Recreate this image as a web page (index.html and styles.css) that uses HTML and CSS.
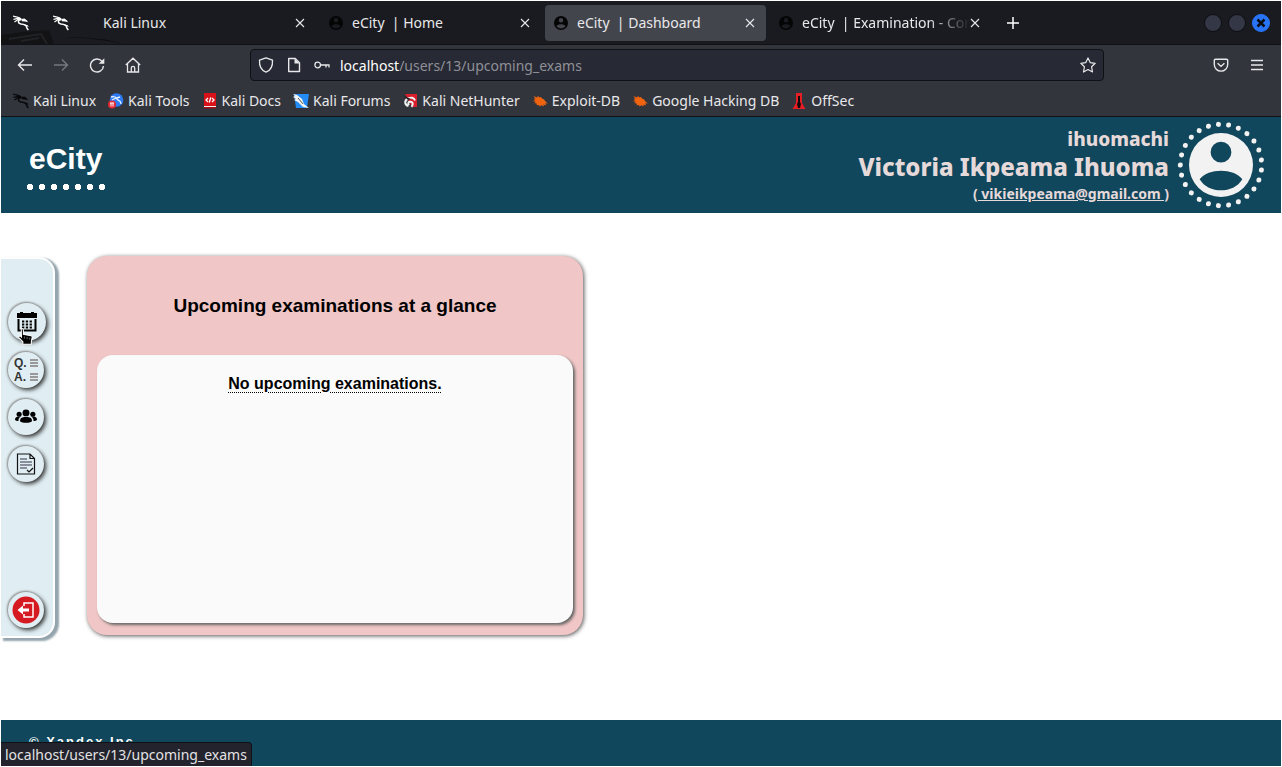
FILE: index.html
```html
<!DOCTYPE html>
<html lang="en">
<head>
<meta charset="utf-8">
<title>eCity | Dashboard</title>
<link rel="stylesheet" href="styles.css">
</head>
<body>
<svg class="defs" aria-hidden="true">
  <symbol id="dragon" viewBox="0 0 16 16"><path d="M0 1.2 6 2.6 8.2 4M.5 4.4 5 3.4l3 .9M1.5 7 5 4.6l3.2.2" fill="none" stroke="currentColor" stroke-width="1.2"/><path d="M7.5 4.2C4.5 5 4.8 8.6 8 9c3 .3 5 .6 5.400 2.600.3 1.500.9 2.400 2 3.400" fill="none" stroke="currentColor" stroke-width="1.500"/><path d="m8 4 3.500-.5 2.500 2 1 1.800-2.800-.8L9 6.300zM9.500 9.500l5 .5 1.300 2-2.800-1.200z" fill="currentColor"/></symbol>
  <symbol id="person" viewBox="0 0 24 24"><path fill="currentColor" fill-rule="evenodd" d="M12 0a12 12 0 1 0 0 24 12 12 0 0 0 0-24zm0 3.300a3.900 3.900 0 1 1 0 7.800 3.900 3.900 0 0 1 0-7.800zM4 17.300c3.300-4.200 12.700-4.200 16 0-3.300 5.600-12.700 5.600-16 0z"/></symbol>
  <symbol id="close" viewBox="0 0 10 10"><path d="m1 1 8 8M9 1 1 9" fill="none" stroke="currentColor" stroke-width="1.100"/></symbol>
  <symbol id="bug" viewBox="0 0 16 16"><path fill="#f1640f" d="M1.500 3 5 4.500 6 3l1.500 1.500L9 4l1.200 1.800 1.800.5 1 1.700 2.800 2.400-2.600-.1 1 2.300-2.600-1.200-.1 2-2-1.200-2 1.300-.5-1.500-2.500.3.500-1.500-2.800-.7 1.800-1L.8 8l2.400-.8-1.700-1.600 2 .2z"/></symbol>
</svg>

<header class="browser">
  <div class="tabs">
    <button class="pin" aria-label="Kali Linux"><svg class="i16"><use href="#dragon"/></svg></button>
    <button class="pin" aria-label="Kali Linux"><svg class="i16"><use href="#dragon"/></svg></button>
    <div class="tab first"><span class="title">Kali Linux</span><button class="x" aria-label="Close tab"><svg class="i10"><use href="#close"/></svg></button></div>
    <div class="tab"><svg class="i14 fav"><use href="#person"/></svg><span class="title">eCity&nbsp; | Home</span><button class="x" aria-label="Close tab"><svg class="i10"><use href="#close"/></svg></button></div>
    <div class="tab active"><svg class="i14 fav"><use href="#person"/></svg><span class="title">eCity&nbsp; | Dashboard</span><button class="x" aria-label="Close tab"><svg class="i10"><use href="#close"/></svg></button></div>
    <div class="tab"><svg class="i14 fav"><use href="#person"/></svg><span class="title fade">eCity&nbsp; | Examination - Cor</span><button class="x" aria-label="Close tab"><svg class="i10"><use href="#close"/></svg></button></div>
    <button class="pin" aria-label="New tab"><svg class="i16" viewBox="0 0 16 16"><path d="M8 2v12M2 8h12" stroke="currentColor" stroke-width="1.500"/></svg></button>
    <div class="window">
      <button class="dot" aria-label="Minimize"></button>
      <button class="dot" aria-label="Maximize"></button>
      <button class="dot quit" aria-label="Close window"><svg class="i10"><path d="m1.500 1.500 7 7M8.500 1.500l-7 7" stroke="currentColor" stroke-width="2.500"/></svg></button>
    </div>
    <svg class="wallpaper" viewBox="0 0 130 14" aria-hidden="true"><path d="M0 5 22 2 48 0l5 14H0z" fill="#131316"/><path d="m8 9 32-5 6 10M20 11l18-3" fill="none" stroke="#202226" stroke-width="2"/><path d="M64 7c22 0 44 2 58 7-18-4-34-6-58-7z" fill="#0c0c0f"/></svg>
  </div>

  <div class="nav">
    <button class="tool" aria-label="Back"><svg class="i16" viewBox="0 0 16 16"><path d="M15 8H1.500M7 2.500 1.500 8 7 13.500" fill="none" stroke="currentColor" stroke-width="1.400"/></svg></button>
    <button class="tool off" aria-label="Forward"><svg class="i16" viewBox="0 0 16 16"><path d="M1 8h13.500M9 2.500 14.500 8 9 13.500" fill="none" stroke="currentColor" stroke-width="1.400"/></svg></button>
    <button class="tool" aria-label="Reload"><svg class="i16" viewBox="0 0 16 16"><path d="M13 4.300A6.500 6.500 0 1 0 14.500 9" fill="none" stroke="currentColor" stroke-width="1.400"/><path d="M15.300 1.200v5.600H9.700z" fill="currentColor"/></svg></button>
    <button class="tool" aria-label="Home"><svg class="i16" viewBox="0 0 16 16"><path d="M.8 8 8 1.200 15.200 8M2.500 6.800V15h11V6.800M6.300 15v-4a1.700 1.700 0 0 1 3.400 0v4" fill="none" stroke="currentColor" stroke-width="1.300"/></svg></button>
    <div class="url">
      <svg class="i16" viewBox="0 0 16 16"><path d="M8 .8 14.500 3.200c.3 5-1.500 10-6.500 12C3 13.200 1.200 8.200 1.500 3.200z" fill="none" stroke="currentColor" stroke-width="1.300" stroke-linejoin="round"/></svg>
      <svg class="i16" viewBox="0 0 16 16"><path d="M2.700 1.500h6.500l4.300 4.300v8.700H2.700z" fill="none" stroke="currentColor" stroke-width="1.400" stroke-linejoin="round"/><path d="M8.500 1.500v5h5z" fill="currentColor"/></svg>
      <svg class="i16" viewBox="0 0 16 16"><circle cx="3.700" cy="8" r="2.800" fill="none" stroke="currentColor" stroke-width="1.300"/><path d="M6.500 8H15v2.500M12 8v2.500" fill="none" stroke="currentColor" stroke-width="1.300"/></svg>
      <span class="address"><b>localhost</b>/users/13/upcoming_exams</span>
      <svg class="i16" viewBox="0 0 16 16"><path d="m8 1 2.200 4.600 5 .7-3.600 3.500.9 5.200L8 12.500 3.500 15l.9-5.200L.8 6.300l5-.7z" fill="none" stroke="currentColor" stroke-width="1.200" stroke-linejoin="round"/></svg>
    </div>
    <button class="tool" aria-label="Save to Pocket"><svg class="i16" viewBox="0 0 16 16"><path d="M2.500 2.200h11a1.200 1.200 0 0 1 1.200 1.200v4a6.700 6.700 0 0 1-13.400 0v-4a1.200 1.200 0 0 1 1.200-1.200zM4.600 6.200 8 9.400l3.400-3.200" fill="none" stroke="currentColor" stroke-width="1.400"/></svg></button>
    <button class="tool" aria-label="Menu"><svg class="i16" viewBox="0 0 16 16"><path d="M2 3.500h12M2 8h12M2 12.500h12" stroke="currentColor" stroke-width="1.300"/></svg></button>
  </div>

  <nav class="bookmarks" aria-label="Bookmarks">
    <a href="#"><svg class="i16 black"><use href="#dragon"/></svg>Kali Linux</a>
    <a href="#"><svg class="i16" viewBox="0 0 16 16"><circle cx="8.500" cy="7" r="6.800" fill="#2d7cf6"/><path d="M3 4c4-1 5 0 6 2s4 1 4 5M4 7l4-2 4-1" fill="none" stroke="#e8f1ff" stroke-width="1.300"/><circle cx="4" cy="11.500" r="4" fill="#e02a35"/><path d="M2 10h4M3 10v3.500M5 10v3.500" stroke="#fff"/></svg>Kali Tools</a>
    <a href="#"><svg class="i16" viewBox="0 0 16 16"><path d="M2 0h12v13H2z" fill="#d9121a"/><path d="M2 13h12v1H2z" fill="#eee"/><path d="M2 14h12v1.500H2z" fill="#a40d13"/><path d="M6 5 4 7l2 2M10 5l2 2-2 2M8.700 4.500 7.300 9.500" fill="none" stroke="#fff" stroke-width="1.300"/></svg>Kali Docs</a>
    <a href="#"><svg class="i16" viewBox="0 0 16 16"><path d="M1 1h15l-2 14H3z" fill="#258cf5"/><path d="m0 1 4 1 5 4 2 5 5 4-6-1-5-5-4-2 2-1-3-2 2-1z" fill="#f4f4f4"/><path d="m5 5 5 6" stroke="#555"/></svg>Kali Forums</a>
    <a href="#"><svg class="i16" viewBox="0 0 16 16"><path d="M3 1h12v13h-5z" fill="#d91f2c"/><path d="M13 7.500C12 4.500 9 4 6 5.500c-4 2-3.500 6.500.5 7.500M7 12c-1.500-2-.5-3.500 1.500-3.200 3 .4 2.500 3.200 1 5" fill="none" stroke="#f2f2f2" stroke-width="2"/><path d="M2 3 9 6 6 7z" fill="#17181c"/></svg>Kali NetHunter</a>
    <a href="#"><svg class="i16"><use href="#bug"/></svg>Exploit-DB</a>
    <a href="#"><svg class="i16"><use href="#bug"/></svg>Google Hacking DB</a>
    <a href="#"><svg class="i16" viewBox="0 0 16 16"><path d="M5 0h6v10l3.500 6h-13L5 10z" fill="#e31e24"/><path d="M7 3h2v6l1 2-1 4H7l-1-4 1-2z" fill="#17090b"/></svg>OffSec</a>
  </nav>
</header>

<header class="site">
  <div class="brand"><h1>eCity</h1><div class="dots"></div></div>
  <div class="user">
    <div class="names">
      <div class="nick">ihuomachi</div>
      <div class="full">Victoria Ikpeama Ihuoma</div>
      <a class="mail" href="#">( vikieikpeama@gmail.com )</a>
    </div>
    <svg class="avatar" viewBox="0 0 88 88" role="img" aria-label="Profile"><circle cx="44" cy="44" r="40.700" fill="none" stroke="#f2f2f2" stroke-width="5" stroke-linecap="round" stroke-dasharray="0 10" pathLength="250" transform="rotate(7.200 44 44)"/><svg x="12" y="12" width="64" height="64"><use href="#person"/></svg></svg>
  </div>
</header>

<main>
  <aside class="side">
    <a class="round hover" href="#" aria-label="Upcoming exams"><svg viewBox="0 0 20 20"><path d="M0 1h3V0h3v1h8V0h3v1h3v5H0z"/><path d="M1.500 7v11.500h17V7" fill="none" stroke="#000" stroke-width="2"/><path d="M5 9.500h10.500M5 12.500h10.500M5 15.500h10.500" stroke="#000" stroke-width="2" stroke-dasharray="2.300 1.500"/></svg>
      <svg class="cursor" viewBox="0 0 14 16"><path d="M3 .7c1-.4 2 .1 2 1.300v4l7.300 1.300c.8.2 1 .8 1 1.500l-.8 4v2.500H4.500V13L.7 9c-.5-1 .8-2 1.800-1.200l.7.700z" fill="#000" stroke="#fff"/><path d="M6 8v2M8.500 8.500v2M11 9v2" stroke="#888" stroke-width=".7"/></svg></a>
    <a class="round" href="#" aria-label="Questions and answers"><span class="qa"><b>Q.</b><i></i><b>A.</b><i></i></span></a>
    <a class="round" href="#" aria-label="Groups"><svg viewBox="0 0 24 20"><circle cx="12" cy="5.500" r="3.800"/><circle cx="4.500" cy="7" r="2.800"/><circle cx="19.500" cy="7" r="2.800"/><path d="M5.500 14c0-2.500 1.500-3.600 4.500-4h4c3 .4 4.500 1.500 4.500 4 0 3-13 3-13 0zM0 13c0-2 1-3 3-3.300h3c-1.500 1-2.300 2.300-2.200 4.600C2 14.300.3 14 0 13zM24 13c0-2-1-3-3-3.300h-3c1.500 1 2.300 2.300 2.200 4.600 1.800 0 3.500-.3 3.800-1.300z"/></svg></a>
    <a class="round" href="#" aria-label="Results"><svg viewBox="0 0 20 22"><path d="M1.500 1H14l4.500 4.500V21h-17zM14 1v4.500h4.500" fill="none" stroke="#111" stroke-width="1.200"/><path d="M4 6h7M4 9h12M4 12h12M4 15h7" stroke="#334" stroke-width="1.200"/><path d="m11 17 2 2 4-4" fill="none" stroke="#111" stroke-width="1.200"/></svg></a>
    <button class="round exit" aria-label="Log out"><svg viewBox="0 0 28 28"><circle cx="14" cy="14" r="13.500" fill="#d51a21"/><path d="M12 10V7h9v14h-9v-3" fill="none" stroke="#fff" stroke-width="1.500"/><path d="M5.500 14 11 9.500v3h6v3h-6v3z" fill="#fff"/></svg></button>
  </aside>
  <section class="card">
    <h2>Upcoming examinations at a glance</h2>
    <div class="panel"><p><span>No upcoming examinations.</span></p></div>
  </section>
</main>

<footer>© Xandex Inc.</footer>
<div class="status">localhost/users/13/upcoming_exams</div>
</body>
</html>
```
FILE: styles.css
```css
* { box-sizing: border-box; }
body {
  margin: 0;
  padding: 1px;
  min-height: 100vh;
  display: flex;
  flex-direction: column;
  background: #fff;
  font-family: "Noto Sans", sans-serif;
  font-size: 14px;
}
button { border: 0; padding: 0; background: none; color: inherit; font: inherit; }
a { color: inherit; text-decoration: none; }
.defs { position: absolute; width: 0; height: 0; }
.i16 { width: 16px; height: 16px; flex: none; }
.i14 { width: 14px; height: 14px; flex: none; }
.i10 { width: 10px; height: 10px; flex: none; }

/* browser chrome */
.browser { background: #33353d; color: #e8e8ea; border-bottom: 1px solid #101115; }
.tabs {
  position: relative;
  display: flex;
  align-items: center;
  gap: 4px;
  height: 44px;
  padding: 0 11px 0 2px;
  background: #1a1b20;
  border-bottom: 1px solid #101115;
}
.wallpaper { position: absolute; left: 0; bottom: 0; width: 130px; height: 14px; }
.pin { width: 36px; height: 36px; display: grid; place-items: center; color: #fff; }
.tab {
  flex: 0 1 221px;
  min-width: 0;
  height: 36px;
  display: flex;
  align-items: center;
  gap: 9px;
  padding: 0 4px 0 9px;
  border-radius: 4px;
}
.first { margin-left: 12px; padding-left: 8px; }
.active { background: #43454d; }
.fav { color: #050506; }
.title { flex: 1; overflow: hidden; white-space: nowrap; }
.fade { margin-right: -16px; -webkit-mask-image: linear-gradient(to right, #000 75%, transparent); mask-image: linear-gradient(to right, #000 75%, transparent); }
.x { width: 24px; height: 24px; display: grid; place-items: center; }
.window { margin-left: auto; display: flex; gap: 6px; }
.dot { width: 18px; height: 18px; border-radius: 50%; background: #343846; border: 1px solid #0d0e12; display: grid; place-items: center; }
.quit { background: #2874f7; border-color: #2874f7; color: #0c0d12; }

.nav { display: flex; align-items: center; height: 40px; padding: 0 6px; }
.tool { width: 36px; height: 32px; display: grid; place-items: center; }
.off { color: #77787e; }
.url {
  flex: 1;
  height: 32px;
  margin: 0 99px;
  padding: 0 7px;
  display: flex;
  align-items: center;
  gap: 12px;
  background: #272934;
  border: 1px solid #101115;
  border-radius: 4px;
}
.address { flex: 1; margin-left: -2px; color: #8f9097; }
.address b { font-weight: 400; color: #fff; }
.bookmarks { display: flex; gap: 12px; height: 31px; padding: 0 12px; align-items: center; white-space: nowrap; }
.bookmarks a { display: flex; align-items: center; gap: 4px; }
.black { color: #08080a; }

/* site header */
.site {
  display: flex;
  justify-content: space-between;
  align-items: center;
  height: 96px;
  padding: 0 16px 0 26px;
  background: #11475c;
  color: #fff;
}
.brand { display: flex; flex-direction: column; gap: 8px; padding-top: 2px; }
h1 { margin: 0; padding: 0 2px; font: bold 30px/34px "Liberation Sans", Arial, sans-serif; }
.dots { width: 78px; height: 6px; background: radial-gradient(circle at 3px 3px, #fff 2px, #fff 3px, transparent 3px) 0 0 / 12px 6px; }
.user { display: flex; align-items: center; gap: 8px; }
.names { padding-top: 1px; text-align: right; color: #e6d9da; }
.nick { font-size: 19px; font-weight: 800; line-height: 26px; }
.full { font-size: 24px; font-weight: 800; line-height: 30px; }
.mail { display: block; font-size: 14px; font-weight: 700; line-height: 24px; text-decoration: underline; }
.avatar { width: 88px; height: 88px; color: #f2f2f2; }

/* content */
main { flex: 1; display: flex; align-items: stretch; gap: 32px; padding: 43px 20px 85px 0; }
.side {
  width: 54px;
  margin: 1px 0 -3px;
  padding: 44px 0 8px 7px;
  display: flex;
  flex-direction: column;
  gap: 11px;
  background: #e0eef3;
  border: 2px solid #fff;
  border-left: 0;
  border-radius: 0 16px 16px 0;
  box-shadow: 3px 2px 2px 1px #95a5ad;
}
.round {
  position: relative;
  width: 36px;
  height: 36px;
  border-radius: 50%;
  display: grid;
  place-items: center;
  background: #e0eef3;
  box-shadow: 2px 2px 4px #333, -1px -1px 2px #999;
}
.round svg { width: 22px; height: 22px; }
.hover { width: 38px; height: 38px; }
.round.hover svg { width: 20px; height: 20px; }
.round.hover .cursor { position: absolute; left: 10px; top: 25px; width: 15px; height: 17px; }
.qa { display: grid; grid-template-columns: 15px 8px; align-items: center; gap: 0 1px; font: bold 12px/14px "Liberation Sans", Arial, sans-serif; color: #333; }
.qa i { height: 8px; background: repeating-linear-gradient(#999 0 2px, transparent 2px 3px); }
.exit { margin-top: auto; }
.round.exit svg { width: 28px; height: 28px; }
.card {
  flex: 0 1 496px;
  display: flex;
  flex-direction: column;
  padding: 10px 10px 12px;
  border-radius: 20px;
  background: #f0c6c6;
  box-shadow: 1px 1px 4px #555;
  font-family: "Liberation Sans", Arial, sans-serif;
  text-align: center;
}
h2 { margin: 28px 0 37px; font-size: 19px; line-height: 24px; }
.panel { flex: 1; border-radius: 16px; background: #fafafa; box-shadow: 2px 2px 3px #666; }
.panel p { margin: 19px 0; font-size: 16px; line-height: 20px; font-weight: bold; }
.panel span { text-decoration: underline dotted 1px; text-underline-offset: 3px; }
footer {
  height: 46px;
  padding: 14px 28px;
  background: #11475c;
  color: #fff;
  font: bold 13px/16px "Liberation Sans", Arial, sans-serif;
  letter-spacing: 2px;
}
.status {
  position: fixed;
  left: 1px;
  bottom: 1px;
  padding: 2px 4px 1px;
  line-height: 20px;
  background: #22232c;
  color: #e2e2e4;
  border: 1px solid #101115;
  border-width: 1px 1px 0 0;
  border-radius: 0 4px 0 0;
}
```
